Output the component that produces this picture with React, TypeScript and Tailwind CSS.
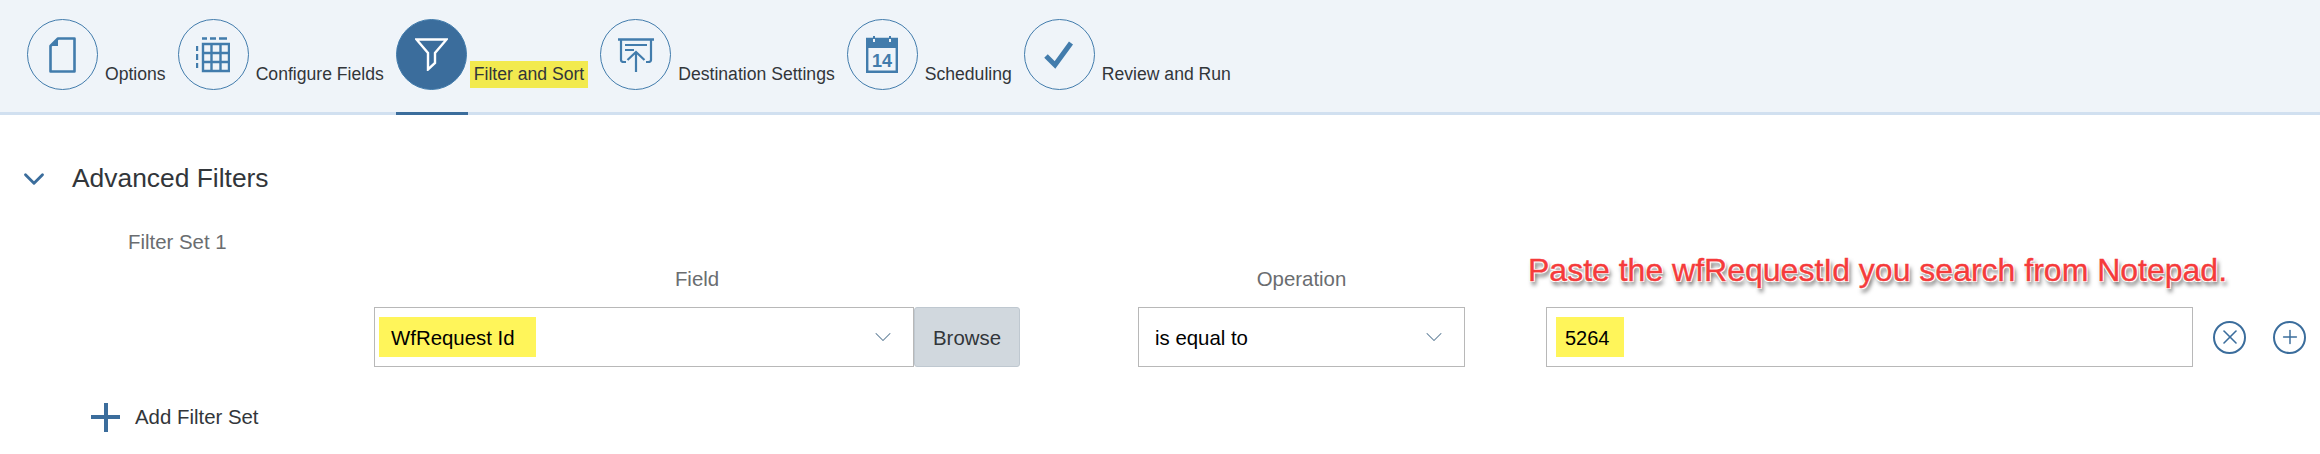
import { ReactNode } from 'react';
import { ChevronDown, Plus, X } from 'lucide-react';

function DocIcon() {
  return (
    <svg width="27" height="36" viewBox="0 0 27 36" fill="none">
      <path d="M9 1.5H25.5V34.5H1.5V9Z" stroke="#427cac" strokeWidth="2.6" strokeLinejoin="round" />
      <path d="M9 1L1 9H9Z" fill="#427cac" />
    </svg>
  );
}

function TableIcon() {
  return (
    <svg width="34" height="36" viewBox="0 0 34 36" fill="none" stroke="#427cac" strokeWidth="2.4">
      <path d="M7 7H33V34H7Z" />
      <path d="M15.5 7V34M24.5 7V34M7 16H33M7 25H33" />
      <path d="M6 1.5H11M14 1.5H20M23 1.5H31" />
      <path d="M1 9V14M1 17V23M1 26V31" />
    </svg>
  );
}

function FunnelIcon() {
  return (
    <svg width="33" height="33" viewBox="0 0 33 33" fill="none" stroke="#ffffff" strokeWidth="2.4" strokeLinejoin="miter">
      <path d="M1.5 1.5H31.5L20 15V25L13 31.5V15Z" />
    </svg>
  );
}

function DestinationIcon() {
  return (
    <svg width="36" height="34" viewBox="0 0 36 34" fill="none" stroke="#427cac" strokeWidth="2.2">
      <path d="M0 1.5H36" strokeWidth="2.6" />
      <path d="M3 1.5V22Q3 24 6 24H8" />
      <path d="M33 1.5V22Q33 24 30 24H28" />
      <path d="M7 7H29M7 12H16" />
      <path d="M18 34V14M9.5 22L18 14L26.5 22" />
    </svg>
  );
}

function CalendarIcon() {
  return (
    <svg width="32" height="37" viewBox="0 0 32 37" fill="none">
      <path d="M1 3H31V12H1Z" fill="#427cac" />
      <path d="M1.2 3H30.8V35.8H1.2Z" stroke="#427cac" strokeWidth="2.4" />
      <path d="M8 3V6M24 3V6" stroke="#eff4f9" strokeWidth="2" />
      <path d="M8 0V3M24 0V3" stroke="#427cac" strokeWidth="2" />
      <text x="16" y="31" textAnchor="middle" fontSize="18" fontWeight="700" fontFamily="Liberation Sans, sans-serif" fill="#427cac">14</text>
    </svg>
  );
}

function CheckIcon() {
  return (
    <svg width="30" height="28" viewBox="0 0 30 28" fill="none">
      <path d="M2 15L11 24L27 2" stroke="#427cac" strokeWidth="5" />
    </svg>
  );
}

interface StepProps {
  label: string;
  icon: ReactNode;
  active?: boolean;
}

function Step({ label, icon, active }: StepProps) {
  return (
    <div className="relative flex h-full items-start">
      <div
        className={`mt-[19px] flex h-[71px] w-[71px] shrink-0 items-center justify-center rounded-full border border-[#427cac] ${
          active ? 'bg-[#3b6d9c]' : ''
        }`}
      >
        {icon}
      </div>
      {active ? (
        <span className="mt-[61px] ml-[3px] bg-[#f2ea4f] px-[4px] text-[17.6px] leading-[27px] text-[#32363a]">
          {label}
        </span>
      ) : (
        <span className="mt-[61px] ml-[7px] text-[17.6px] leading-[27px] text-[#32363a]">{label}</span>
      )}
      {active && <div className="absolute top-[112px] left-0 h-[3px] w-[72px] bg-[#3b6d9c]" />}
    </div>
  );
}

export default function App() {
  return (
    <div className="h-[454px] w-[2320px] overflow-hidden bg-white font-['Liberation_Sans',sans-serif]">
      <div className="h-[117px] bg-white">
        <div className="flex h-[115px] gap-[12px] border-b-[3px] border-[#d1e0f0] bg-[#eff4f9] pl-[27px]">
          <Step label="Options" icon={<DocIcon />} />
          <Step label="Configure Fields" icon={<TableIcon />} />
          <Step label="Filter and Sort" icon={<FunnelIcon />} active />
          <Step label="Destination Settings" icon={<DestinationIcon />} />
          <Step label="Scheduling" icon={<CalendarIcon />} />
          <Step label="Review and Run" icon={<CheckIcon />} />
        </div>
      </div>

      <div className="mt-[46px] flex h-[32px] items-center pl-[17px]">
        <ChevronDown className="h-[34px] w-[34px] shrink-0 text-[#3b6d9c]" strokeWidth={2} />
        <h2 className="ml-[21px] text-[26.4px] text-[#32363a]">Advanced Filters</h2>
      </div>

      <p className="mt-[36px] ml-[128px] text-[20.4px] leading-[22px] text-[#6a6d70]">Filter Set 1</p>

      <div className="mt-[14px] flex pl-[374px]">
        <div className="w-[646px]">
          <p className="h-[40px] text-center text-[20.4px] leading-[24px] text-[#6a6d70]">Field</p>
          <div className="flex h-[60px]">
            <div className="flex w-[540px] items-center justify-between border border-[#b8b8b8] pr-[16px] pl-[4px]">
              <span className="flex h-[40px] w-[157px] items-center bg-[#fff55a] pt-[2px] pl-[12px] text-[20.4px] text-black">
                WfRequest Id
              </span>
              <ChevronDown className="h-[28px] w-[28px] text-[#5a7a94]" strokeWidth={0.9} />
            </div>
            <button className="w-[106px] rounded-[3px] border border-[#bfc8d0] bg-[#d1d8de] pt-[2px] text-[20.4px] text-[#32363a]">
              Browse
            </button>
          </div>
        </div>

        <div className="ml-[118px] w-[327px]">
          <p className="h-[40px] text-center text-[20.4px] leading-[24px] text-[#6a6d70]">Operation</p>
          <div className="flex h-[60px] items-center justify-between border border-[#b8b8b8] pr-[16px] pl-[16px]">
            <span className="pt-[2px] text-[20.4px] text-black">is equal to</span>
            <ChevronDown className="h-[28px] w-[28px] text-[#5a7a94]" strokeWidth={0.9} />
          </div>
        </div>

        <div className="relative ml-[81px] w-[647px]">
          <p className="absolute top-[-21px] left-[-18px] text-[32px] whitespace-nowrap text-[#f53b3b] [-webkit-text-stroke:0.4px_#f53b3b] [text-shadow:-1px_-1px_0_#fff,1px_-1px_0_#fff,-1px_1px_0_#fff,1px_1px_0_#fff,2px_4px_4px_#555]">
            Paste the wfRequestId you search from Notepad.
          </p>
          <div className="mt-[40px] flex h-[60px] items-center border border-[#b8b8b8] pl-[9px]">
            <span className="flex h-[40px] w-[68px] items-center bg-[#fff55a] pt-[2px] pl-[9px] text-[20px] text-black">5264</span>
          </div>
        </div>

        <div className="mt-[40px] flex h-[60px] items-center gap-[27px] pl-[20px]">
          <span className="flex h-[33px] w-[33px] items-center justify-center rounded-full border-2 border-[#3b6d9c]">
            <X className="h-[24px] w-[24px] text-[#3b6d9c]" strokeWidth={1.6} />
          </span>
          <span className="flex h-[33px] w-[33px] items-center justify-center rounded-full border-2 border-[#3b6d9c]">
            <Plus className="h-[22px] w-[22px] text-[#3b6d9c]" strokeWidth={1.6} />
          </span>
        </div>
      </div>

      <div className="mt-[35px] flex h-[30px] items-center pl-[91px]">
        <span className="relative h-[29px] w-[29px]">
          <span className="absolute top-0 left-[12.5px] h-[29px] w-[4px] bg-[#3b6d9c]" />
          <span className="absolute top-[12.5px] left-0 h-[4px] w-[29px] bg-[#3b6d9c]" />
        </span>
        <span className="ml-[15px] text-[20.4px] text-[#32363a]">Add Filter Set</span>
      </div>
    </div>
  );
}
